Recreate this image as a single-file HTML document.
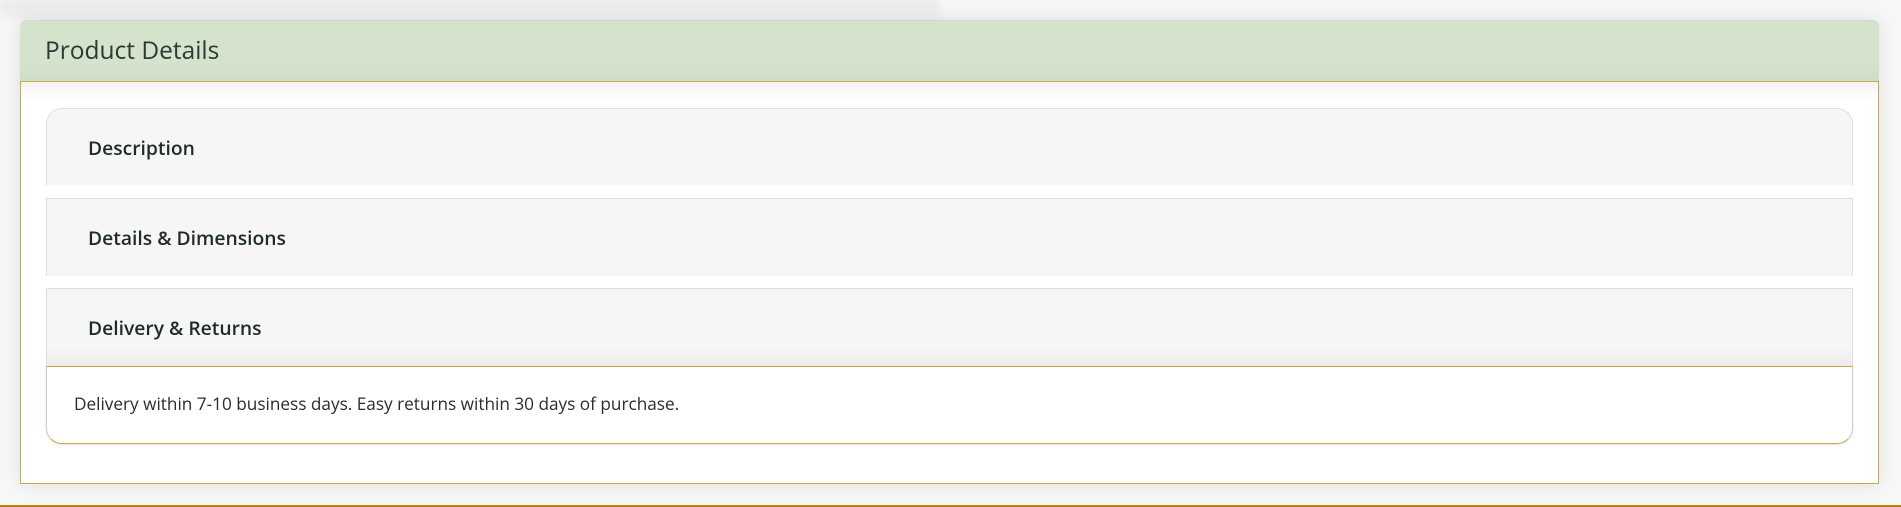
<!DOCTYPE html>
<html><head><meta charset="utf-8"><style>
html,body{margin:0;padding:0;}
body{width:1901px;height:507px;background:#f7f7f7;position:relative;overflow:hidden;font-family:"Open Sans","Liberation Sans",sans-serif;}
.topshade{position:absolute;left:0;top:0;width:940px;height:20px;background:linear-gradient(#eaeaea,#f0f0f0);filter:blur(3px);}
.card{position:absolute;left:20px;top:20px;width:1859px;height:464px;background:#fff;border-radius:6px 6px 0 0;box-shadow:0 0 18px rgba(0,0,0,0.10);}
.hdr{position:absolute;left:0;top:0;width:1859px;height:61px;background:linear-gradient(#d5e3cc 70%,#cfdcc6);border-radius:6px 6px 0 0;border-top:1px solid #d8d8d8;box-sizing:border-box;}
.hdr span{position:absolute;left:25px;top:13px;font-size:24.5px;color:#2b3a35;}
.body{position:absolute;left:0;top:61px;width:1859px;height:403px;border:1px solid #c9a94f;box-sizing:border-box;background:linear-gradient(#f3f3f3,#fff 20px);}
.item{position:absolute;left:46px;width:1807px;background:#f6f6f6;border:1px solid #dedede;border-bottom:none;box-sizing:border-box;}
.item span{position:absolute;left:41px;font-size:19.3px;font-weight:600;color:#1f2b2a;}
.panel{position:absolute;left:46px;top:366px;width:1807px;height:78px;border:1px solid #c9a94f;border-left-color:#d6cfb8;border-right-color:#d6cfb8;box-sizing:border-box;border-radius:0 0 16px 16px;background:#fff;box-shadow:0 1px 2px rgba(0,0,0,0.12);}
.panel span{position:absolute;left:27px;top:26px;font-size:17.2px;color:#2b2b2b;}
.gold{position:absolute;left:0;top:505px;width:1901px;height:2px;background:#b8860b;}
</style></head><body>
<div class="topshade"></div>
<div class="card">
<div class="hdr"><span>Product Details</span></div>
<div class="body"></div>
</div>
<div class="item" style="top:108px;height:77px;border-radius:16px 16px 0 0;"><span style="top:25px">Description</span></div>
<div class="item" style="top:198px;height:78px;"><span style="top:25px">Details &amp; Dimensions</span></div>
<div class="item" style="top:288px;height:78px;background:linear-gradient(#f6f6f6 75%,#ececec);"><span style="top:25px">Delivery &amp; Returns</span></div>
<div class="panel"><span>Delivery within 7-10 business days. Easy returns within 30 days of purchase.</span></div>
<div class="gold"></div>
</body></html>
